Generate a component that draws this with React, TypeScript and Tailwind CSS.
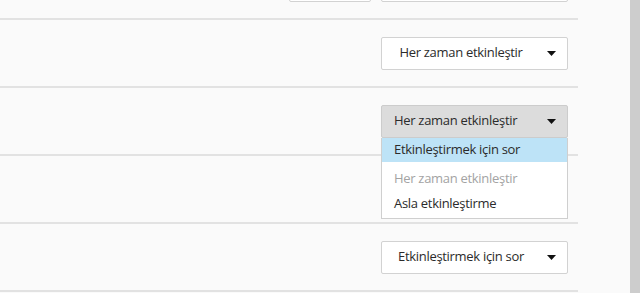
import React from 'react';

function Arrow() {
  return (
    <svg width="9" height="5" viewBox="0 0 9 5" className="shrink-0">
      <path d="M0 0 L9 0 L4.5 5 Z" fill="#111" />
    </svg>
  );
}

function Select({ label, open = false }: { label: string; open?: boolean }) {
  return (
    <div className="relative w-[187px]">
      <div
        className={`h-[33px] flex items-center gap-[7px] border rounded-[2px] pr-[11px] ${
          open ? 'bg-[#dcdcdc] border-[#cccccc] pl-[12px]' : 'bg-white border-[#d2d2d2]'
        }`}
      >
        <span className={`flex-1 text-[13px] tracking-[-0.3px] text-[#2b2b2b] ${open ? '' : 'text-center'}`}>
          {label}
        </span>
        <Arrow />
      </div>
      {open && (
        <div className="absolute left-0 top-[33px] w-full bg-white border border-[#cfcfcf] border-t-0 z-10 pb-[2px] text-[13px] tracking-[-0.3px]">
          <div className="h-[24px] bg-[#bde3f7] flex items-center pl-[12px] text-[#2b2b2b]">
            Etkinleştirmek için sor
          </div>
          <div className="h-[24px] mt-[5px] flex items-center pl-[12px] text-[#a3a3a3]">Her zaman etkinleştir</div>
          <div className="h-[24px] mt-[1px] flex items-center pl-[12px] text-[#2b2b2b]">Asla etkinleştirme</div>
        </div>
      )}
    </div>
  );
}

function Row({ children }: { children?: React.ReactNode }) {
  return (
    <div className="h-[68px] border-b-[2px] border-[#e2e2e2] flex items-center justify-end pr-[10px]">
      {children}
    </div>
  );
}

export default function App() {
  return (
    <div
      className="w-[640px] h-[293px] overflow-hidden bg-[#fafafa] flex"
      style={{ fontFamily: '"Open Sans", "Noto Sans", sans-serif' }}
    >
      <div className="w-[578px] flex flex-col">
        <div className="h-[20px] shrink-0 border-b-[2px] border-[#e2e2e2] flex items-start justify-end pr-[10px] gap-[10px]">
          <div className="w-[82px] h-[32px] -mt-[30px] bg-white border border-[#d2d2d2] rounded-[2px]" />
          <div className="w-[187px] h-[32px] -mt-[30px] bg-white border border-[#d2d2d2] rounded-[2px]" />
        </div>
        <Row>
          <Select label="Her zaman etkinleştir" />
        </Row>
        <Row>
          <Select label="Her zaman etkinleştir" open />
        </Row>
        <Row />
        <Row>
          <Select label="Etkinleştirmek için sor" />
        </Row>
      </div>
      <div className="flex-1" />
      <div className="w-[10px] bg-[#cdcdcd]" />
    </div>
  );
}
